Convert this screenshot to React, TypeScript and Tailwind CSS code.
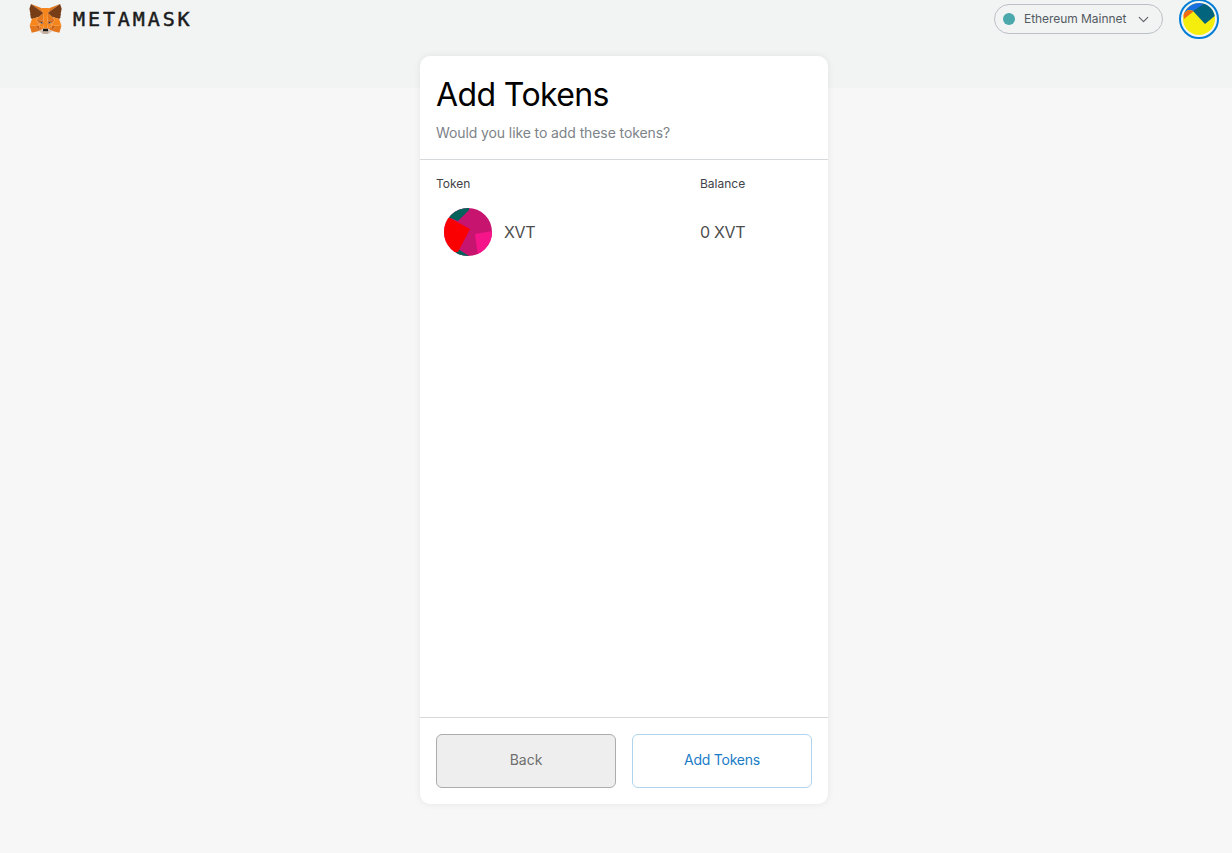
import { ChevronDown } from "lucide-react";

const font = { fontFamily: "Inter, sans-serif" };

const foxShapes: [string, string][] = [
  ["274.1,35.5 174.6,109.4 193,65.8", "#E2761B"],
  ["44.4,35.5 143.1,110.1 125.6,65.8", "#E4761B"],
  ["238.3,206.8 211.8,247.4 268.5,263 284.8,207.7", "#E4761B"],
  ["33.9,207.7 50.1,263 106.8,247.4 80.3,206.8", "#E4761B"],
  ["103.6,138.2 87.8,162.1 144.1,164.6 142.1,104.1", "#E4761B"],
  ["214.9,138.2 175.9,103.4 174.6,164.6 230.8,162.1", "#E4761B"],
  ["106.8,247.4 140.6,230.9 111.4,208.1", "#E4761B"],
  ["177.9,230.9 211.8,247.4 207.1,208.1", "#E4761B"],
  ["211.8,247.4 177.9,230.9 180.6,253 180.3,262.3", "#D7C1B3"],
  ["106.8,247.4 138.3,262.3 138.1,253 140.6,230.9", "#D7C1B3"],
  ["138.8,193.5 110.6,185.2 130.5,176.1", "#233447"],
  ["179.7,193.5 188,176.1 208,185.2", "#233447"],
  ["106.8,247.4 111.6,206.8 80.3,207.7", "#CD6116"],
  ["207,206.8 211.8,247.4 238.3,207.7", "#CD6116"],
  ["230.8,162.1 174.6,164.6 179.8,193.5 188.1,176.1 208.1,185.2", "#CD6116"],
  ["110.6,185.2 130.6,176.1 138.8,193.5 144.1,164.6 87.8,162.1", "#CD6116"],
  ["87.8,162.1 111.4,208.1 110.6,185.2", "#E4751F"],
  ["208.1,185.2 207.1,208.1 230.8,162.1", "#E4751F"],
  ["144.1,164.6 138.8,193.5 145.4,227.6 146.9,182.7", "#E4751F"],
  ["174.6,164.6 171.9,182.6 173.1,227.6 179.8,193.5", "#E4751F"],
  ["179.8,193.5 173.1,227.6 177.9,230.9 207.1,208.1 208.1,185.2", "#F6851B"],
  ["110.6,185.2 111.4,208.1 140.6,230.9 145.4,227.6 138.8,193.5", "#F6851B"],
  ["180.3,262.3 180.6,253 178.1,250.8 140.4,250.8 138.1,253 138.3,262.3 106.8,247.4 117.8,256.4 140.1,271.9 178.4,271.9 200.8,256.4 211.8,247.4", "#C0AD9E"],
  ["177.9,230.9 173.1,227.6 145.4,227.6 140.6,230.9 138.1,253 140.4,250.8 178.1,250.8 180.6,253", "#161616"],
  ["278.3,114.2 286.8,73.4 274.1,35.5 177.9,106.9 214.9,138.2 267.2,153.5 278.8,140 273.8,136.4 281.8,129.1 275.6,124.3 283.6,118.2", "#763D16"],
  ["31.8,73.4 40.3,114.2 34.9,118.2 42.9,124.3 36.8,129.1 44.8,136.4 39.8,140 51.3,153.5 103.6,138.2 141,106.9 44.4,35.5", "#763D16"],
  ["267.2,153.5 214.9,138.2 230.8,162.1 207.1,208.1 238.3,207.7 284.8,207.7", "#F6851B"],
  ["103.6,138.2 51.3,153.5 33.9,207.7 80.3,207.7 111.4,208.1 87.8,162.1", "#F6851B"],
  ["174.6,164.6 177.9,106.9 193.1,65.8 125.6,65.8 140.6,106.9 144.1,164.6 145.3,182.8 145.4,227.6 173.1,227.6 173.3,182.8", "#F6851B"],
];

function Fox() {
  return (
    <svg width="33" height="30" viewBox="31 35 256 237" className="shrink-0">
      {foxShapes.map(([points, fill]) => (
        <polygon key={points} points={points} fill={fill} />
      ))}
    </svg>
  );
}

function TokenIcon() {
  return (
    <svg width="48" height="48" viewBox="0 0 48 48" className="shrink-0">
      <defs>
        <clipPath id="token-clip">
          <circle cx="24" cy="24" r="24" />
        </clipPath>
      </defs>
      <g clipPath="url(#token-clip)">
        <rect width="48" height="48" fill="#c7146f" />
        <polygon points="0,0 25,0 25,2 14,13 4,9" fill="#03635c" />
        <polygon points="14,41 25,48 10,48" fill="#03635c" />
        <polygon points="48,23 31,26 34,48 48,48" fill="#f5148a" />
        <polygon points="4,9 26,21 14,44 0,44 0,9" fill="#fb0000" />
      </g>
    </svg>
  );
}

function Avatar() {
  return (
    <div className="-mt-px flex h-10 w-10 items-center justify-center rounded-full border-2 border-[#037dd6]">
      <svg width="32" height="32" viewBox="0 0 32 32">
        <defs>
          <clipPath id="avatar-clip">
            <circle cx="16" cy="16" r="16" />
          </clipPath>
        </defs>
        <g clipPath="url(#avatar-clip)">
          <rect width="32" height="32" fill="#f5ee0c" />
          <polygon points="0,0 32,0 32,8 11,8 5,7 0,11" fill="#1a6fe0" />
          <polygon points="0,11 5,7 11,8 1,16" fill="#f26a12" />
          <polygon points="10,8 24,-1 34,11 22,21" fill="#03647e" />
        </g>
      </svg>
    </div>
  );
}

export default function App() {
  return (
    <div className="min-h-[853px] bg-[#f7f7f7]" style={font}>
      <header className="flex h-[88px] items-start justify-between bg-[#f2f4f4] pl-[29px] pr-[13px]">
        <div className="flex items-center gap-[11px] pt-1">
          <Fox />
          <span className="text-[20px] leading-[30px] tracking-[2.9px] text-[#1c1c1c] [-webkit-text-stroke:0.5px_#1c1c1c]" style={{ fontFamily: '"DejaVu Sans Mono", monospace' }}>
            METAMASK
          </span>
        </div>
        <div className="flex items-start gap-4">
          <div className="mt-1 flex h-[30px] w-[169px] items-center rounded-full border border-[#bbc0c5] pl-2 pr-[10px]">
            <span className="h-3 w-3 rounded-full bg-[#4ba9ac]" />
            <span className="ml-[9px] flex-1 text-xs tracking-[-0.05px] text-[#535a61]">Ethereum Mainnet</span>
            <ChevronDown size={17} strokeWidth={1.5} className="text-[#535a61]" />
          </div>
          <Avatar />
        </div>
      </header>

      <main className="-mt-8 flex justify-center pl-[16px]">
        <div className="flex h-[748px] w-[408px] flex-col rounded-[10px] bg-white shadow-[0_0_7px_0_rgba(0,0,0,0.08)]">
          <div className="h-[104px] border-b border-[#d6d9dc] px-4 pt-[17px]">
            <h1 className="text-[32px] leading-[44px] tracking-[-0.6px] text-black">Add Tokens</h1>
            <p className="mt-[6px] text-sm tracking-[-0.1px] text-[#7d8389]">Would you like to add these tokens?</p>
          </div>

          <div className="flex-1 px-4 pt-4">
            <div className="flex text-xs text-[#3f4347]">
              <span className="w-[264px]">Token</span>
              <span>Balance</span>
            </div>
            <div className="mt-4 flex items-center">
              <div className="flex w-[264px] items-center gap-3 pl-2">
                <TokenIcon />
                <span className="text-base tracking-[-0.3px] text-[#4d4d4d]">XVT</span>
              </div>
              <span className="text-base tracking-[-0.3px] text-[#4d4d4d]">0 XVT</span>
            </div>
          </div>

          <div className="flex h-[87px] gap-4 border-t border-[#d6d9dc] p-4">
            <button className="flex-1 rounded-md border border-[#acacac] bg-[#eeeeee] pb-[3px] text-sm text-[#6f6f6f]">Back</button>
            <button className="flex-1 rounded-md border border-[#aed4ee] bg-white pb-[3px] text-sm tracking-[-0.25px] text-[#1a7cc8]">Add Tokens</button>
          </div>
        </div>
      </main>
    </div>
  );
}
